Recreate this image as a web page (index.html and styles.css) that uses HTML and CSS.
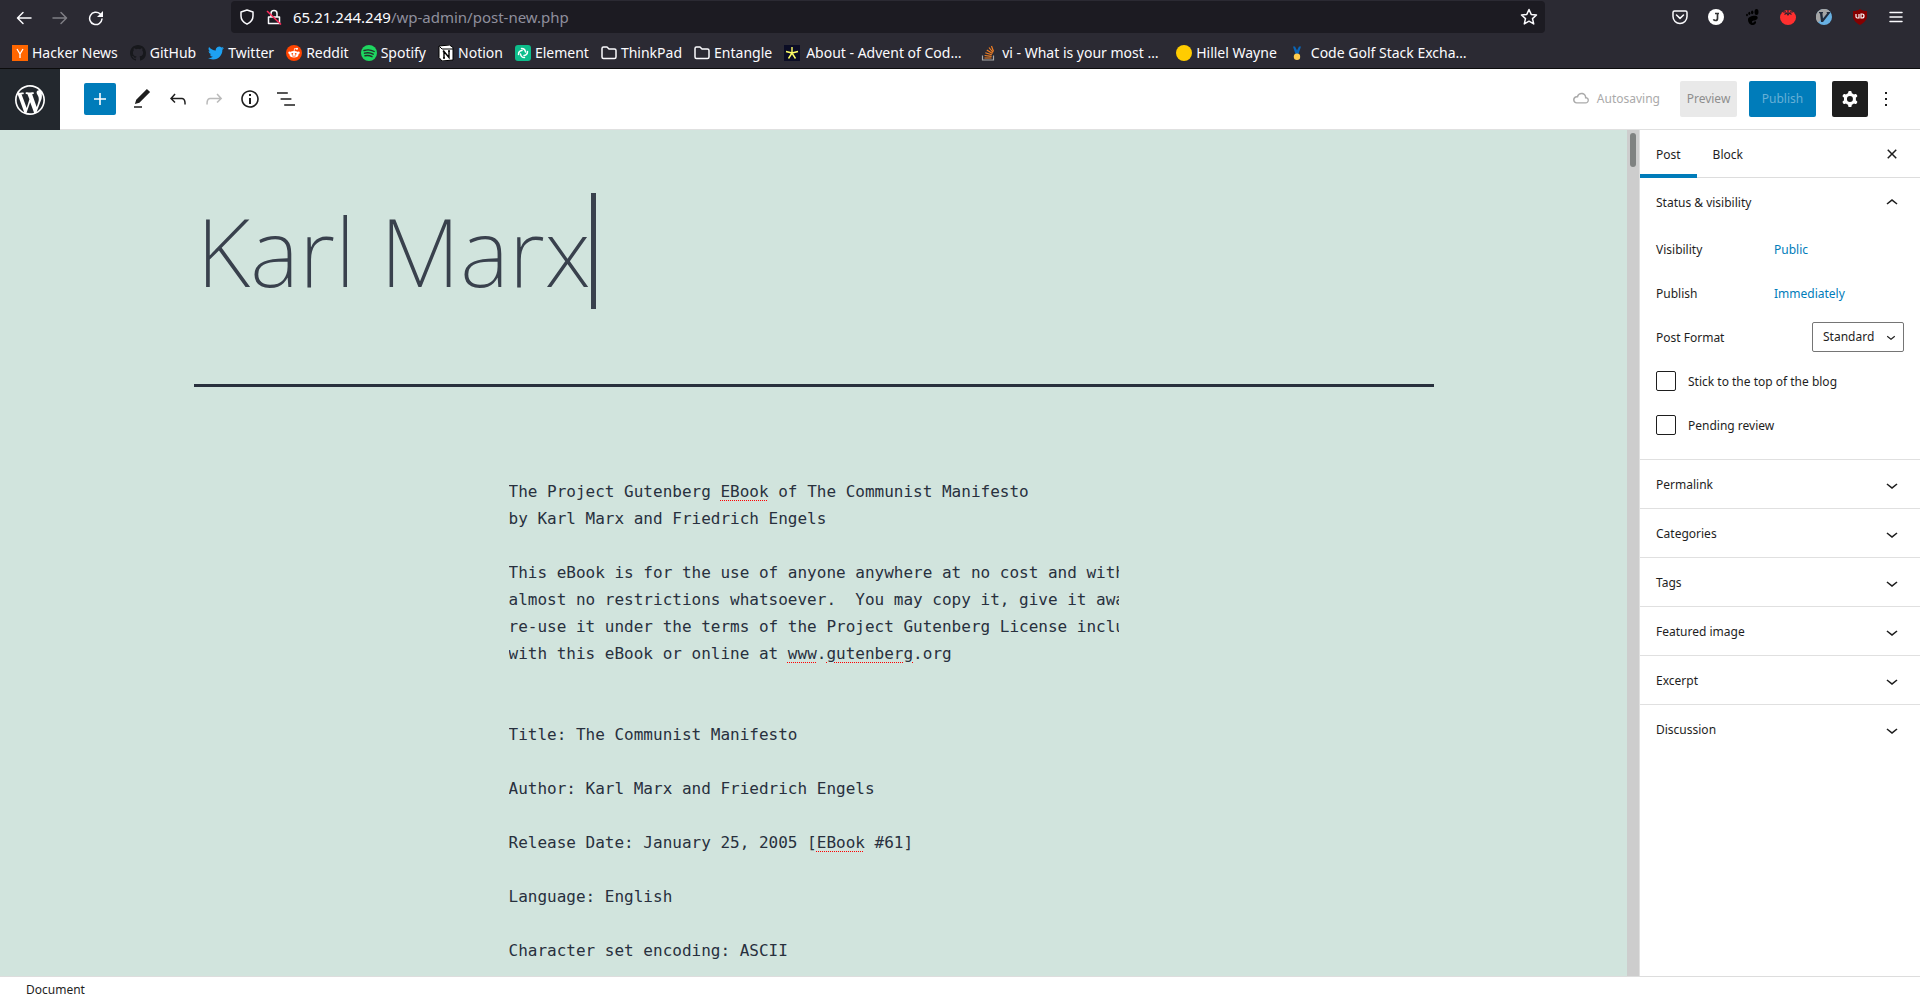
FILE: index.html
```html
<!DOCTYPE html>
<html lang="en">
<head>
<meta charset="utf-8">
<title>Add New Post</title>
<link rel="stylesheet" href="styles.css">
</head>
<body>
<header class="browser">
  <div class="nav-row">
    <div class="nav-buttons">
      <button class="nav-btn" aria-label="Back"><svg width="16" height="16" viewBox="0 0 16 16"><path d="M15 8H2M7 2.500 1.500 8 7 13.500" class="line"/></svg></button>
      <button class="nav-btn dim" aria-label="Forward"><svg width="16" height="16" viewBox="0 0 16 16"><path d="M1 8h13M9 2.500 14.500 8 9 13.500" class="line"/></svg></button>
      <button class="nav-btn" aria-label="Reload"><svg width="16" height="16" viewBox="0 0 16 16"><path d="M14 9a6.200 6.200 0 1 1-2-5.200" class="line"/><path d="M15 1v6H9z" fill="currentColor"/></svg></button>
    </div>
    <div class="url-bar">
      <svg width="16" height="16" viewBox="0 0 16 16"><path d="M8 1 14 3v4c0 3.800-2.500 6.500-6 8.200C4.500 13.500 2 10.800 2 7V3z" class="line"/></svg>
      <svg class="lock" width="16" height="16" viewBox="0 0 16 16"><path d="M5 7V4.500a3 3 0 0 1 6 0V7M2.500 8h11v6.500h-11z" class="line"/><path d="M1 2 15 15.500" stroke="#ff2a5b" stroke-width="1.500"/></svg>
      <p class="url"><span class="host">65.21.244.249</span>/wp-admin/post-new.php</p>
      <svg width="18" height="18" viewBox="0 0 18 18"><path d="m9 1.500 2.200 4.900 5.300.6-4 3.600 1.200 5.300L9 13.200l-4.700 2.700 1.200-5.300-4-3.600 5.300-.6z" class="line"/></svg>
    </div>
    <div class="extensions">
      <svg width="16" height="16" viewBox="0 0 16 16"><path d="M2.500 2h11A1.500 1.500 0 0 1 15 3.500V7.500a7 7 0 0 1-14 0V3.500A1.500 1.500 0 0 1 2.500 2zM4.500 6 8 9.400 11.500 6" class="line"/></svg>
      <svg width="16" height="16" viewBox="0 0 16 16"><circle cx="8" cy="8" r="8" fill="#fff"/><path d="M9.500 4v5.500q0 2-2 2-1.500 0-2-1.300M7 4.500h4" fill="none" stroke="#333" stroke-width="1.700"/></svg>
      <svg width="16" height="16" viewBox="0 0 16 16"><g fill="#000"><ellipse cx="12.500" cy="3" rx="2" ry="3"/><ellipse cx="8.200" cy="3.300" rx="1.200" ry="1.900"/><ellipse cx="5.300" cy="4.300" rx="1" ry="1.600"/><ellipse cx="3" cy="6" rx=".9" ry="1.300"/><path d="M12.500 7c-2-.8-8.500 0-8.500 3.500 0 3 2 5.500 4.500 5.500 2 0 4-1.500 3.500-3.200-.4-1-1.700-.3-2.300.4-1 1.200-2.200.3-1.600-.7C9 11 12.300 12 13.500 9.500 14 8.500 13.500 7.400 12.500 7z"/></g></svg>
      <svg width="16" height="16" viewBox="0 0 16 16"><ellipse cx="8" cy="8.500" rx="8" ry="7.500" fill="#ff2f2f"/><path d="M3 3l3-.2M8 .5v4M13 3l-3-.2M4.500 5.500 6.500 4 8 6l1.500-2 2 1.500" fill="none" stroke="#272530" stroke-width="1.200"/></svg>
      <svg width="16" height="16" viewBox="0 0 16 16"><circle cx="8" cy="8" r="8" fill="#68b1e3"/><path d="M2 13.500A8 8 0 0 1 14 2.500z" fill="#a5a5a5"/><path d="M3 3h4v1l-.6.500.6 5L11 4.500 10.500 3H14v1L7 13H5L4 4.500 3 4z" fill="#222b3b"/></svg>
      <svg width="16" height="16" viewBox="0 0 16 16"><path d="M8 0c2 1.500 4 2 7 2v5c0 4-3 7-7 9-4-2-7-5-7-9V2c3 0 5-.5 7-2z" fill="#850000"/><path d="M4 5v2.500q0 1.500 1.200 1.500h1.800V5M9 5v4h1q2 0 2-2t-2-2z" fill="none" stroke="#fff" stroke-width="1.200"/></svg>
      <button class="nav-btn" aria-label="Open menu"><svg width="16" height="16" viewBox="0 0 16 16"><path d="M2 3.500h12M2 8h12M2 12.500h12" class="line"/></svg></button>
    </div>
  </div>
  <nav class="bookmarks" aria-label="Bookmarks">
    <a href="#"><svg width="16" height="16" viewBox="0 0 16 16"><path d="M0 0h16v16H0z" fill="#f60"/><path d="m5 4 3 5 3-5M8 9v4" fill="none" stroke="#fff" stroke-width="1.300"/></svg>Hacker News</a>
    <a href="#"><svg width="16" height="16" viewBox="0 0 16 16"><path fill="#17181c" d="M8 0C3.580 0 0 3.580 0 8c0 3.540 2.290 6.530 5.470 7.590.4.070.55-.17.55-.38 0-.19-.01-.82-.01-1.490-2.010.37-2.530-.49-2.690-.94-.09-.23-.48-.94-.82-1.130-.28-.15-.68-.52-.01-.53.63-.01 1.080.58 1.230.82.72 1.210 1.870.87 2.330.66.070-.52.28-.87.51-1.070-1.780-.2-3.640-.89-3.640-3.950 0-.87.31-1.590.82-2.150-.08-.2-.36-1.020.08-2.120 0 0 .67-.21 2.200.82a7.600 7.600 0 0 1 4 0c1.530-1.040 2.200-.82 2.200-.82.44 1.100.16 1.920.08 2.120.51.56.82 1.270.82 2.150 0 3.070-1.870 3.750-3.650 3.950.29.25.54.73.54 1.480 0 1.070-.01 1.930-.01 2.200 0 .21.15.46.55.38A8 8 0 0 0 16 8c0-4.420-3.580-8-8-8z"/></svg>GitHub</a>
    <a href="#"><svg width="16" height="16" viewBox="0 0 24 24"><path fill="#1da1f2" d="M23.950 4.570a10 10 0 0 1-2.820.77 4.960 4.960 0 0 0 2.160-2.720 9.900 9.900 0 0 1-3.120 1.190 4.920 4.920 0 0 0-8.380 4.480A13.930 13.930 0 0 1 1.640 3.160a4.920 4.920 0 0 0 1.520 6.570 4.900 4.900 0 0 1-2.230-.61v.06a4.920 4.920 0 0 0 3.950 4.830 5 5 0 0 1-2.210.08 4.940 4.940 0 0 0 4.600 3.420A9.870 9.870 0 0 1 0 19.540a13.990 13.990 0 0 0 7.560 2.210c9.050 0 13.990-7.500 13.990-13.980 0-.21 0-.42-.02-.63a9.940 9.940 0 0 0 2.460-2.550z"/></svg>Twitter</a>
    <a href="#"><svg width="16" height="16" viewBox="0 0 16 16"><circle cx="8" cy="8" r="8" fill="#ff4500"/><g fill="#fff"><ellipse cx="8" cy="9.300" rx="4.500" ry="3.200"/><circle cx="3.500" cy="7.800" r="1.200"/><circle cx="12.500" cy="7.800" r="1.200"/><circle cx="11" cy="3.700" r="1"/></g><path d="m8 6.500.6-3 2.400.4" fill="none" stroke="#fff" stroke-width=".8"/><g fill="#ff4500"><circle cx="6.300" cy="8.800" r=".9"/><circle cx="9.700" cy="8.800" r=".9"/></g><path d="M6 10.700q2 1.200 4 0" fill="none" stroke="#ff4500" stroke-width=".7"/></svg>Reddit</a>
    <a href="#"><svg width="16" height="16" viewBox="0 0 16 16"><circle cx="8" cy="8" r="8" fill="#1ed760"/><path d="M3 5.500q5.500-1.700 10.200 1M3.500 8.200q4.700-1.300 8.700 1M4 10.800q3.800-1 7 .9" fill="none" stroke="#23302a" stroke-width="1.400" stroke-linecap="round"/></svg>Spotify</a>
    <a href="#"><svg width="16" height="16" viewBox="0 0 16 16"><path d="M1 1 11.500 0 15 2.500V15L4 16l-3-3.500z" fill="#fff" stroke="#000"/><path d="M1.500 1.500 4 4h11" fill="none" stroke="#000"/><path d="M6 13V6.500l5 6V6M4.800 6.500h2M10 6h2M5 13h2" fill="none" stroke="#000" stroke-width="1.400"/></svg>Notion</a>
    <a href="#"><svg width="16" height="16" viewBox="0 0 16 16"><rect width="16" height="16" rx="3" fill="#0dbd8b"/><g fill="none" stroke="#fff" stroke-width="1.500" stroke-linecap="round"><path d="M6.500 3.500A4 4 0 0 1 10.500 7M12.500 6.500a4 4 0 0 1-3.500 4M9.500 12.500a4 4 0 0 1-4-3.500M3.500 9.500A4 4 0 0 1 7 5.500"/></g></svg>Element</a>
    <a href="#"><svg width="16" height="16" viewBox="0 0 16 16"><path d="M1 12V3.500A1.500 1.500 0 0 1 2.500 2H6l2 2h5.500A1.500 1.500 0 0 1 15 5.500V12a1.500 1.500 0 0 1-1.500 1.500h-11A1.500 1.500 0 0 1 1 12z" class="line"/></svg>ThinkPad</a>
    <a href="#"><svg width="16" height="16" viewBox="0 0 16 16"><path d="M1 12V3.500A1.500 1.500 0 0 1 2.500 2H6l2 2h5.500A1.500 1.500 0 0 1 15 5.500V12a1.500 1.500 0 0 1-1.500 1.500h-11A1.500 1.500 0 0 1 1 12z" class="line"/></svg>Entangle</a>
    <a href="#" class="wide"><svg width="16" height="16" viewBox="0 0 16 16"><path d="M0 0h16v16H0z" fill="#0b0d25"/><path d="M8 2v6l6-1.500M8 8l3.500 5.500M8 8l-3.500 5.500M8 8 2 6.500" fill="none" stroke="#ffff66" stroke-width="1.400"/></svg>About - Advent of Cod…</a>
    <a href="#" class="wide"><svg width="16" height="16" viewBox="0 0 16 16"><path d="M2.500 10.500V15h11v-4.500" fill="none" stroke="#aaa" stroke-width="1.200"/><path d="M4.500 13h7M4.600 10.500l7 .8M5.300 7.800l6.500 2M6.800 5l5.700 3.500M9 2.500l4 5M11.500 1l2 5.500" stroke="#f48024" stroke-width="1.200"/></svg>vi - What is your most …</a>
    <a href="#"><svg width="16" height="16" viewBox="0 0 16 16"><circle cx="8" cy="8" r="8" fill="#fc0"/></svg>Hillel Wayne</a>
    <a href="#" class="wide"><svg width="16" height="16" viewBox="0 0 16 16"><path d="M4 1.500h2l2 4 2-4h2L9.500 9h-3z" fill="#0b66b8"/><circle cx="8" cy="11.800" r="3.200" fill="#ffcc4d"/></svg>Code Golf Stack Excha…</a>
  </nav>
</header>

<div class="editor-header">
  <a class="wp-logo" href="#" aria-label="View Posts"><svg width="36" height="36" viewBox="-2 -2 24 24"><path fill="#fff" d="M20 10c0-5.510-4.490-10-10-10C4.480 0 0 4.490 0 10c0 5.520 4.480 10 10 10 5.510 0 10-4.480 10-10zM7.780 15.370L4.370 6.220c.55-.02 1.170-.08 1.170-.08.5-.06.44-1.130-.06-1.110 0 0-1.450.11-2.370.11-.18 0-.37 0-.58-.01C4.120 2.690 6.870 1.110 10 1.110c2.330 0 4.450.87 6.050 2.340-.68-.11-1.650.39-1.650 1.580 0 .74.45 1.360.9 2.100.35.61.55 1.360.55 2.460 0 1.490-1.400 5-1.400 5l-3.030-8.370c.54-.02.82-.17.82-.17.5-.05.44-1.250-.06-1.220 0 0-1.440.12-2.380.12-.87 0-2.330-.12-2.330-.12-.5-.03-.56 1.200-.06 1.220l.92.08 1.260 3.410zM17.410 10c.24-.64.74-1.870.43-4.250.7 1.290 1.050 2.710 1.050 4.250 0 3.290-1.730 6.240-4.400 7.780.97-2.590 1.940-5.200 2.920-7.780zM6.100 18.090C3.120 16.650 1.110 13.530 1.110 10c0-1.300.23-2.480.72-3.590C3.250 10.300 4.670 14.200 6.100 18.090zm4.030-6.630l2.580 6.980c-.86.29-1.760.45-2.710.45-.79 0-1.570-.11-2.290-.33.81-2.380 1.620-4.740 2.420-7.100z"/></svg></a>
  <div class="tools">
    <button class="add" aria-label="Add block"><svg width="24" height="24" viewBox="0 0 24 24"><path d="M18 11.200h-5.200V6h-1.600v5.200H6v1.600h5.200V18h1.600v-5.200H18z"/></svg></button>
    <button class="tool" aria-label="Tools"><svg width="24" height="24" viewBox="0 0 24 24"><path d="M20.100 5.100L16.900 2 6.200 12.700l-1.300 4.400 4.500-1.300L20.100 5.100zM4 20.800h8v-1.500H4v1.500z"/></svg></button>
    <button class="tool" aria-label="Undo"><svg width="24" height="24" viewBox="0 0 24 24"><path d="M18.300 11.700c-.6-.6-1.400-.9-2.300-.9H6.700l2.900-3.300-1.100-1-4.500 5L8.500 16l1-1-2.700-2.700H16c.5 0 .9.2 1.300.5 1 1 1 3.400 1 4.500v.3h1.500v-.2c0-1.500 0-4.300-1.500-5.700z"/></svg></button>
    <button class="tool" aria-label="Redo" disabled><svg width="24" height="24" viewBox="0 0 24 24"><path d="M15.600 6.500l-1.100 1 2.900 3.300H8c-.9 0-1.700.3-2.300.9-1.400 1.500-1.400 4.200-1.400 5.600v.2h1.500v-.3c0-1.100 0-3.500 1-4.500.3-.3.7-.5 1.300-.5h9.200L14.500 15l1.100 1.100 4.600-4.600-4.600-5z"/></svg></button>
    <button class="tool" aria-label="Details"><svg width="24" height="24" viewBox="0 0 24 24"><path d="M12 3.200c-4.800 0-8.800 3.900-8.800 8.800 0 4.800 3.900 8.800 8.800 8.800 4.800 0 8.800-3.900 8.800-8.800 0-4.800-4-8.800-8.800-8.800zm0 16c-4 0-7.200-3.300-7.200-7.200C4.800 8 8 4.800 12 4.800s7.200 3.300 7.200 7.200c0 4-3.200 7.200-7.200 7.200zM11 17h2v-6h-2v6zm0-8h2V7h-2v2z"/></svg></button>
    <button class="tool" aria-label="List view"><svg width="24" height="24" viewBox="0 0 24 24"><path d="M13.800 5.200H3v1.500h10.800V5.200zm-3.600 12v1.500H21v-1.500H10.200zm7.200-6H6.600v1.500h10.800v-1.500z"/></svg></button>
  </div>
  <div class="settings">
    <span class="saving"><svg width="24" height="24" viewBox="0 0 24 24"><path d="M17.300 10.100c0-2.500-2.100-4.400-4.800-4.400-2.200 0-4.100 1.400-4.600 3.300h-.2C5.700 9 4 10.700 4 12.800c0 2.100 1.700 3.800 3.700 3.800h9c1.800 0 3.200-1.500 3.200-3.300.1-1.600-1.100-2.900-2.600-3.200zm-.5 5.100h-9c-1.200 0-2.200-1.100-2.200-2.300s1-2.400 2.200-2.400h1.300l.3-1.100c.4-1.300 1.700-2.200 3.200-2.200 1.800 0 3.300 1.300 3.300 2.900v1.300l1.300.2c.8.1 1.400.9 1.400 1.800-.1 1-.9 1.800-1.800 1.800z"/></svg>Autosaving</span>
    <button class="preview" disabled>Preview</button>
    <button class="publish" disabled>Publish</button>
    <button class="cog" aria-label="Settings"><svg width="24" height="24" viewBox="0 0 24 24"><path fill-rule="evenodd" d="M10.289 4.836A1 1 0 0111.275 4h1.306a1 1 0 01.987.836l.244 1.466c.787.26 1.503.679 2.108 1.218l1.393-.522a1 1 0 011.216.437l.653 1.130a1 1 0 01-.23 1.273l-1.148.944a6.025 6.025 0 010 2.435l1.149.946a1 1 0 01.23 1.272l-.653 1.130a1 1 0 01-1.216.437l-1.394-.522c-.605.54-1.320.958-2.108 1.218l-.244 1.466a1 1 0 01-.987.836h-1.306a1 1 0 01-.986-.836l-.244-1.466a5.995 5.995 0 01-2.108-1.218l-1.394.522a1 1 0 01-1.217-.436l-.653-1.131a1 1 0 01.23-1.272l1.149-.946a6.026 6.026 0 010-2.435l-1.148-.944a1 1 0 01-.23-1.272l.653-1.131a1 1 0 011.217-.437l1.393.522a5.994 5.994 0 012.108-1.218l.244-1.466zM14.929 12a3 3 0 11-6 0 3 3 0 016 0z"/></svg></button>
    <button class="tool" aria-label="Options"><svg width="24" height="24" viewBox="0 0 24 24"><path d="M13 19h-2v-2h2v2zm0-6h-2v-2h2v2zm0-6h-2V5h2v2z"/></svg></button>
  </div>
</div>

<div class="workspace">
  <main class="canvas">
    <div class="title-block">
      <input class="post-title" type="text" aria-label="Add title" value="Karl Marx">
      <span class="caret"></span>
    </div>
<pre class="code-block">The Project Gutenberg <u>EBook</u> of The Communist Manifesto
by Karl Marx and Friedrich Engels

This eBook is for the use of anyone anywhere at no cost and with
almost no restrictions whatsoever.  You may copy it, give it away or
re-use it under the terms of the Project Gutenberg License included
with this eBook or online at <u>www</u>.<u>gutenberg</u>.org


Title: The Communist Manifesto

Author: Karl Marx and Friedrich Engels

Release Date: January 25, 2005 [<u>EBook</u> #61]

Language: English

Character set encoding: ASCII
</pre>
  </main>
  <div class="scrollbar"><div class="thumb"></div></div>
  <aside class="sidebar">
    <div class="tabs">
      <button class="tab active">Post</button>
      <button class="tab">Block</button>
      <button class="close" aria-label="Close settings"><svg width="24" height="24" viewBox="0 0 24 24"><path d="M12 13.060l3.712 3.713 1.061-1.060L13.061 12l3.712-3.712-1.060-1.060L12 10.938 8.288 7.227l-1.061 1.060L10.939 12l-3.712 3.712 1.060 1.061L12 13.061z"/></svg></button>
    </div>
    <section class="panel open">
      <button class="panel-title">Status &amp; visibility<svg width="24" height="24" viewBox="0 0 24 24"><path d="M6.500 12.400L12 8l5.500 4.400-.9 1.200L12 10l-4.500 3.600-1-1.200z"/></svg></button>
      <div class="panel-body">
        <div class="field"><span class="label">Visibility</span><a href="#">Public</a></div>
        <div class="field"><span class="label">Publish</span><a href="#">Immediately</a></div>
        <div class="field spread"><label for="format">Post Format</label>
          <span class="select-wrap"><select id="format"><option>Standard</option><option>Aside</option><option>Gallery</option></select><svg width="18" height="18" viewBox="0 0 24 24"><path d="M17.500 11.600L12 16l-5.500-4.400.9-1.200L12 14l4.500-3.600 1 1.200z"/></svg></span></div>
        <div class="field check"><input type="checkbox" id="sticky"><label for="sticky">Stick to the top of the blog</label></div>
        <div class="field check"><input type="checkbox" id="pending"><label for="pending">Pending review</label></div>
      </div>
    </section>
    <section class="panel"><button class="panel-title">Permalink<svg width="24" height="24" viewBox="0 0 24 24"><path d="M17.500 11.600L12 16l-5.500-4.400.9-1.200L12 14l4.500-3.600 1 1.200z"/></svg></button></section>
    <section class="panel"><button class="panel-title">Categories<svg width="24" height="24" viewBox="0 0 24 24"><path d="M17.500 11.600L12 16l-5.500-4.400.9-1.200L12 14l4.500-3.600 1 1.200z"/></svg></button></section>
    <section class="panel"><button class="panel-title">Tags<svg width="24" height="24" viewBox="0 0 24 24"><path d="M17.500 11.600L12 16l-5.500-4.400.9-1.200L12 14l4.500-3.600 1 1.200z"/></svg></button></section>
    <section class="panel"><button class="panel-title">Featured image<svg width="24" height="24" viewBox="0 0 24 24"><path d="M17.500 11.600L12 16l-5.500-4.400.9-1.200L12 14l4.500-3.600 1 1.200z"/></svg></button></section>
    <section class="panel"><button class="panel-title">Excerpt<svg width="24" height="24" viewBox="0 0 24 24"><path d="M17.500 11.600L12 16l-5.500-4.400.9-1.200L12 14l4.500-3.600 1 1.200z"/></svg></button></section>
    <section class="panel"><button class="panel-title">Discussion<svg width="24" height="24" viewBox="0 0 24 24"><path d="M17.500 11.600L12 16l-5.500-4.400.9-1.200L12 14l4.500-3.600 1 1.200z"/></svg></button></section>
  </aside>
</div>
<footer class="status-bar">Document</footer>
</body>
</html>
```
FILE: styles.css
```css
* { box-sizing: border-box; }

body {
  margin: 0;
  height: 100vh;
  display: flex;
  flex-direction: column;
  overflow: hidden;
  background: #fff;
  color: #1e1e1e;
  font: 12px/16px "Noto Sans", sans-serif;
}

button {
  border: 0;
  padding: 0;
  background: none;
  color: inherit;
  font: inherit;
  display: flex;
  align-items: center;
  justify-content: center;
}

svg { flex: none; fill: currentColor; }
.line { fill: none; stroke: currentColor; stroke-width: 1.5; stroke-linejoin: round; stroke-linecap: round; }
a { text-decoration: none; color: inherit; }

/* Browser chrome */
.browser {
  flex: none;
  background: #2b2a33;
  border-bottom: 1px solid #0c0c0d;
  color: #fbfbfe;
  font-size: 14px;
  line-height: 20px;
}
.nav-row { display: flex; height: 35px; padding-top: 1px; }
.nav-buttons { display: flex; flex: none; gap: 20px; width: 231px; padding-left: 16px; }
.dim { opacity: .4; }
.url-bar {
  flex: 1;
  display: flex;
  align-items: center;
  gap: 11px;
  height: 32px;
  padding: 0 7px 0 8px;
  border-radius: 4px;
  background: #1c1b22;
}
.url { flex: 1; margin: 0; color: #8f8f9d; font-size: 15px; }
.host { color: #fbfbfe; }
.extensions {
  flex: none;
  width: 375px;
  height: 32px;
  padding: 0 16px 0 127px;
  display: flex;
  align-items: center;
  justify-content: space-between;
}
.bookmarks { display: flex; gap: 12px; height: 33px; padding: 3px 12px 0; align-items: center; }
.bookmarks a { display: flex; align-items: center; gap: 4px; white-space: nowrap; }
.bookmarks .wide { min-width: 184px; gap: 6px; }

/* Editor header */
.editor-header { flex: none; display: flex; height: 61px; border-bottom: 1px solid #e0e0e0; }
.wp-logo {
  width: 60px;
  height: 61px;
  display: flex;
  align-items: center;
  justify-content: center;
  background: #23282e;
}
.tools { flex: 1; display: flex; align-items: center; padding-left: 24px; }
.add { width: 32px; height: 32px; margin-right: 8px; border-radius: 2px; background: #007cba; color: #fff; }
.tool { width: 36px; height: 36px; }
.tool:disabled { opacity: .3; color: #1e1e1e; }
.settings { display: flex; align-items: center; padding-right: 16px; }
.saving { display: flex; align-items: center; gap: 4px; margin-right: 20px; color: #aaa; }
.preview, .publish, .cog { height: 36px; border-radius: 2px; }
.preview { width: 57px; margin-right: 12px; background: #e9e9e9; color: #8e8e8e; }
.publish { width: 67px; margin-right: 16px; background: #007cba; color: #66b0d6; }
.cog { width: 36px; background: #1e1e1e; color: #fff; }

/* Canvas */
.workspace { flex: 1; display: flex; min-height: 0; }
.canvas { flex: 1; min-width: 0; overflow: hidden; background: #d1e4dd; color: #28303d; }
.title-block {
  max-width: 1240px;
  height: 257px;
  margin: 0 auto;
  padding-top: 63px;
  display: flex;
  border-bottom: 3px solid #28303d;
}
.post-title {
  width: 397px;
  height: 116px;
  padding: 0 0 0 3px;
  border: 0;
  background: none;
  color: #39414d;
  font: 200 94px/116px "Noto Sans", sans-serif;
}
.caret { width: 5px; height: 116px; background: #39414d; }
.code-block {
  max-width: 610px;
  margin: 91px auto 0;
  overflow: hidden;
  font: 16px/27px "DejaVu Sans Mono", monospace;
}
.code-block u { text-decoration: underline dotted #f00 1px; text-underline-offset: 3px; }
.scrollbar { flex: none; width: 12px; padding: 3px; background: #cdcdcd; }
.thumb { height: 34px; border-radius: 3px; background: #7f8281; }

/* Settings sidebar */
.sidebar { flex: none; width: 281px; border-left: 1px solid #e0e0e0; }
.tabs { display: flex; height: 48px; border-bottom: 1px solid #ddd; padding-right: 16px; }
.tab { height: 48px; padding: 2px 16px 0; }
.tab.active { border-bottom: 4px solid #007cba; padding-top: 6px; }
.close { width: 24px; margin-left: auto; }
.panel + .panel { border-top: 1px solid #e0e0e0; }
.panel-title { width: 100%; height: 48px; padding: 1px 16px 0; justify-content: space-between; }
.panel-body { padding: 8px 16px 5px; }
.field { display: flex; align-items: center; height: 30px; margin-bottom: 14px; }
.field > label, .field > a, .label { padding-top: 2px; }
.label { width: 118px; }
.field a { color: #007cba; }
.spread { justify-content: space-between; }
.select-wrap { position: relative; }
.select-wrap svg { position: absolute; right: 4px; top: 6px; pointer-events: none; }
select {
  appearance: none;
  display: block;
  width: 92px;
  height: 30px;
  padding: 0 10px;
  border: 1px solid #757575;
  border-radius: 2px;
  background: #fff;
  color: inherit;
  font: inherit;
}
.check { gap: 12px; }
.check input {
  appearance: none;
  width: 20px;
  height: 20px;
  margin: 0;
  border: 1px solid #1e1e1e;
  border-radius: 2px;
}

.status-bar { flex: none; height: 25px; border-top: 1px solid #ddd; padding: 5px 26px; }
```
